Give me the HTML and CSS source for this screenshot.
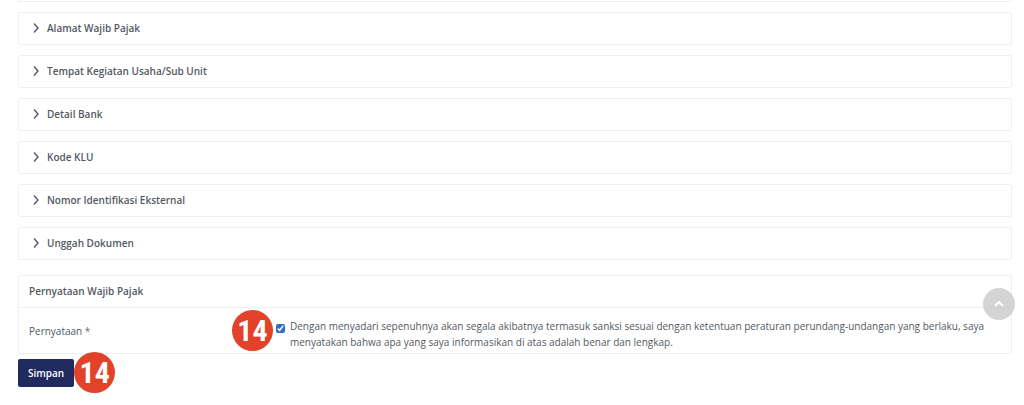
FILE: index.html
```html
<!DOCTYPE html>
<html lang="id">
<head>
  <meta charset="utf-8">
  <title>Wajib Pajak</title>
  <link rel="stylesheet" href="styles.css">
</head>
<body>
  <div class="card-end"></div>

  <form class="content">
    <button class="panel" type="button"><svg class="chevron" viewBox="0 0 6 10"><path d="M1 .5l4 4.5-4 4.5"/></svg>Alamat Wajib Pajak</button>
    <button class="panel" type="button"><svg class="chevron" viewBox="0 0 6 10"><path d="M1 .5l4 4.5-4 4.5"/></svg>Tempat Kegiatan Usaha/Sub Unit</button>
    <button class="panel" type="button"><svg class="chevron" viewBox="0 0 6 10"><path d="M1 .5l4 4.5-4 4.5"/></svg>Detail Bank</button>
    <button class="panel" type="button"><svg class="chevron" viewBox="0 0 6 10"><path d="M1 .5l4 4.5-4 4.5"/></svg>Kode KLU</button>
    <button class="panel" type="button"><svg class="chevron" viewBox="0 0 6 10"><path d="M1 .5l4 4.5-4 4.5"/></svg>Nomor Identifikasi Eksternal</button>
    <button class="panel" type="button"><svg class="chevron" viewBox="0 0 6 10"><path d="M1 .5l4 4.5-4 4.5"/></svg>Unggah Dokumen</button>

    <div class="statement">
      <h3>Pernyataan Wajib Pajak</h3>
      <div class="statement-row">
        <div class="field">Pernyataan <span class="required">*</span></div>
        <span class="step">14</span>
        <input class="check" type="checkbox" id="setuju" checked>
        <label class="agree" for="setuju">Dengan menyadari sepenuhnya akan segala akibatnya termasuk sanksi sesuai dengan ketentuan peraturan perundang-undangan yang berlaku, saya menyatakan bahwa apa yang saya informasikan di atas adalah benar dan lengkap.</label>
      </div>
    </div>

    <div class="actions">
      <button class="save" type="submit">Simpan</button>
      <span class="step">14</span>
    </div>
  </form>

  <button class="to-top" type="button" aria-label="Ke atas"><svg viewBox="0 0 10 6"><path d="M1 5l4-4 4 4"/></svg></button>
</body>
</html>
```

FILE: styles.css
```css
* {
  box-sizing: border-box;
}
body {
  margin: 0;
  padding: 0 12px 0 18px;
  background-color: #fff;
  color: #53595f;
  font-family: "Open Sans", "Noto Sans", sans-serif;
  font-size: 10px;
  line-height: 16px;
}
button {
  font: inherit;
  color: inherit;
}
.card-end {
  height: 2px;
  border: 1px solid #f0f0f0;
  border-top: none;
}
.content {
  display: flex;
  flex-direction: column;
  gap: 10px;
  padding-top: 10px;
}
.panel {
  display: flex;
  align-items: center;
  gap: 8px;
  width: 100%;
  height: 33px;
  padding: 0 14px 1px;
  background-color: #fff;
  border: 1px solid #f0f0f0;
  border-radius: 2px;
  font-weight: 600;
  text-align: left;
}
.chevron {
  width: 6px;
  height: 10px;
  fill: none;
  stroke: #53595f;
  stroke-width: 1.4;
}
.statement {
  margin-top: 5px;
  border: 1px solid #f0f0f0;
  border-radius: 2px;
}
.statement h3 {
  margin: 0;
  padding: 7px 10px 8px;
  border-bottom: 1px solid #f0f0f0;
  font-size: 10px;
  font-weight: 600;
}
.statement-row {
  display: flex;
  align-items: center;
  padding: 2px 20px 2px 10px;
}
.field {
  flex: 0 0 203px;
}
.required {
  color: #7a6a70;
}
.step {
  flex: none;
  width: 41px;
  height: 41px;
  border-radius: 50%;
  background-color: #e2412a;
  color: #fff;
  font-family: "Liberation Sans Narrow", "Roboto Condensed", "Open Sans", sans-serif;
  font-size: 30px;
  font-weight: 700;
  line-height: 41px;
  text-align: center;
}
.check {
  flex: none;
  width: 9px;
  height: 9px;
  margin: 0 5px 4px 3px;
  accent-color: #2f6fc0;
}
.agree {
  flex: 1;
  padding-top: 6px;
}
.actions {
  display: flex;
  align-items: center;
  margin-top: -12px;
}
.save {
  height: 28px;
  padding: 0 10px;
  background-color: #202a5e;
  border: none;
  border-radius: 2px;
  color: #fff;
  font-weight: 600;
}
.to-top {
  position: fixed;
  right: 9px;
  bottom: 85px;
  display: flex;
  align-items: center;
  justify-content: center;
  width: 32px;
  height: 32px;
  padding: 0;
  background-color: rgba(205, 205, 205, 0.85);
  border: none;
  border-radius: 50%;
}
.to-top svg {
  width: 10px;
  height: 6px;
  fill: none;
  stroke: #fff;
  stroke-width: 2;
}
```
